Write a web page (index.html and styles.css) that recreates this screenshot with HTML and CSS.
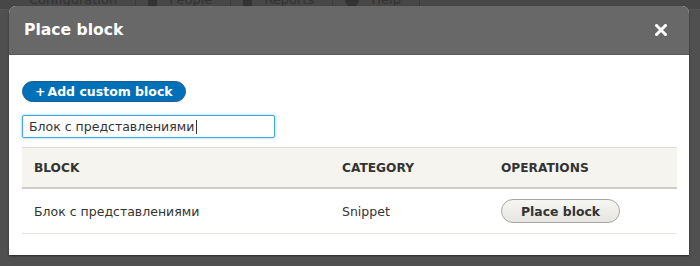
FILE: index.html
```html
<!DOCTYPE html>
<html lang="en">
<head>
    <meta charset="UTF-8">
    <title>Place block</title>
    <link rel="stylesheet" href="styles.css">
</head>
<body>
    <div class="toolbar">
        <span class="tab tab-config">Configuration</span>
        <span class="tab"><i class="tab-icon"></i>People</span>
        <span class="tab"><i class="tab-icon"></i>Reports</span>
        <span class="tab"><i class="tab-icon round"></i>Help</span>
    </div>

<div class="dialog">
    <div class="dialog-title">
        <span>Place block</span>
        <button class="close-btn" title="Close">
            <svg width="12" height="12" viewBox="0 0 12 12">
                <path d="M1.5 1.5 L10.5 10.5 M10.5 1.5 L1.5 10.5" stroke="#fff" stroke-width="3" stroke-linecap="square"/>
            </svg>
        </button>
    </div>
    <div class="dialog-body">
        <a class="add-button">+<span class="add-label">Add custom block</span></a>
        <div class="filter">
            <input type="text" class="filter-input" value="Блок с представлениями"><span class="caret"></span>
        </div>
        <table>
            <thead>
                <tr>
                    <th class="col-block">Block</th>
                    <th class="col-category">Category</th>
                    <th>Operations</th>
                </tr>
            </thead>
            <tbody>
                <tr>
                    <td>Блок с представлениями</td>
                    <td>Snippet</td>
                    <td><button class="place-button">Place block</button></td>
                </tr>
            </tbody>
        </table>
    </div>
</div>

</body>
</html>
```

FILE: styles.css
```css
body {
    margin: 0;
    background-color: #505050;
    font-family: "DejaVu Sans", sans-serif;
    color: #333;
    height: 266px;
    overflow: hidden;
    position: relative;
}
.toolbar {
    height: 9px;
    background-color: #474747;
    border-bottom: 1px solid #555;
    display: flex;
    align-items: flex-end;
    overflow: hidden;
}
.tab {
    display: flex;
    align-items: center;
    height: 18px;
    line-height: 18px;
    font-size: 13px;
    color: #333;
    padding: 0 18px 0 12px;
    border-right: 1px solid #3c3c3c;
}
.tab-config {
    padding-left: 29px;
}
.tab-icon {
    display: inline-block;
    width: 9px;
    height: 14px;
    background-color: #333;
    margin-right: 12px;
}
.tab-icon.round {
    width: 14px;
    border-radius: 50%;
}
.dialog {
    position: absolute;
    left: 9px;
    top: 6px;
    width: 680px;
    background-color: #fff;
    border-radius: 7px 7px 0 0;
    box-shadow: 0 1px 2px rgba(0,0,0,0.5);
}
.dialog-title {
    height: 48px;
    background-color: #686868;
    border-radius: 7px 7px 0 0;
    display: flex;
    align-items: center;
    justify-content: space-between;
    padding: 0 22px 0 15px;
    color: #fff;
    font-weight: bold;
    font-size: 15.6px;
    border-bottom: 1px solid #5a5a5a;
}
.close-btn {
    background: none;
    border: none;
    padding: 0;
    width: 12px;
    height: 12px;
    display: flex;
}
.dialog-body {
    padding: 26px 12px 21px 13px;
}
.add-button {
    display: inline-flex;
    align-items: center;
    box-sizing: border-box;
    height: 21px;
    width: 164px;
    padding: 0 0 0 12px;
    background-color: #0071b8;
    border: 1px solid #1a5a8e;
    border-radius: 12px;
    color: #fff;
    font-weight: bold;
    font-size: 12.5px;
}
.add-label {
    margin-left: 2px;
}
.filter {
    margin-top: 13px;
    position: relative;
    width: 253px;
}
.filter-input {
    display: block;
    box-sizing: border-box;
    width: 253px;
    height: 23px;
    border: 1px solid #40a6e0;
    border-radius: 2px;
    box-shadow: 0 0 3px rgba(64,166,224,0.6);
    padding: 0 6px;
    font-family: "DejaVu Sans", sans-serif;
    font-size: 12.5px;
    color: #333;
    outline: none;
}
.caret {
    position: absolute;
    left: 174px;
    top: 5px;
    width: 1px;
    height: 14px;
    background-color: #333;
}
table {
    width: 100%;
    border-collapse: collapse;
    margin-top: 9px;
    font-size: 12.5px;
}
th {
    background-color: #f5f4ef;
    border-top: 1px solid #dcdbd6;
    border-bottom: 2px solid #cfcdc7;
    height: 39px;
    text-align: left;
    text-transform: uppercase;
    font-size: 12.2px;
    padding: 0 12px;
}
.col-block {
    width: 284px;
}
.col-category {
    width: 135px;
}
td {
    height: 44px;
    border-bottom: 1px solid #e6e4df;
    padding: 0 12px;
}
.place-button {
    font-family: "DejaVu Sans", sans-serif;
    font-weight: bold;
    font-size: 12.4px;
    color: #333;
    width: 119px;
    height: 24px;
    border: 1px solid #a6a6a6;
    border-radius: 12px;
    background: linear-gradient(to bottom, #f6f6f3, #e6e5e0);
    padding: 0;
}
```
